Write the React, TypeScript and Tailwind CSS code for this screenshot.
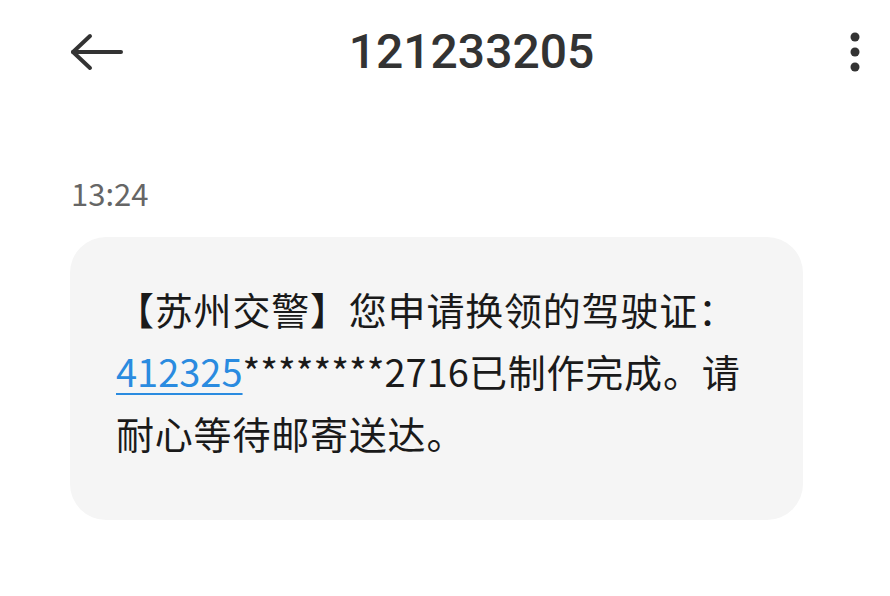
import React from 'react';

const BackArrow = () => (
  <svg width="56" height="40" viewBox="0 0 56 40" fill="none" stroke="#333" strokeWidth="4" strokeLinecap="round" strokeLinejoin="round">
    <path d="M4 20 H52" />
    <path d="M21 4 L4 20 L21 36" />
  </svg>
);

const MoreDots = () => (
  <svg width="20" height="44" viewBox="0 0 20 44" fill="#333">
    <circle cx="10" cy="7" r="4.5" />
    <circle cx="10" cy="22" r="4.5" />
    <circle cx="10" cy="37" r="4.5" />
  </svg>
);

export default function App() {
  return (
    <div
      className="w-[890px] h-[596px] bg-white overflow-hidden"
      style={{ fontFamily: '"Noto Sans CJK SC", "Noto Sans", sans-serif' }}
    >
      {/* Top bar */}
      <div className="flex items-center h-[102px] pt-[2px]">
        <div className="ml-[69px]">
          <BackArrow />
        </div>
        <div
          className="flex-1 pr-[27px] text-center text-[48px] font-medium text-[#333] leading-none"
          style={{ fontFamily: 'Roboto, "Noto Sans", sans-serif' }}
        >
          121233205
        </div>
        <div className="mr-[25px]">
          <MoreDots />
        </div>
      </div>

      {/* Timestamp */}
      <div className="mt-[72px] ml-[71px] text-[31px] leading-[38px] text-[#666]">13:24</div>

      {/* Message bubble */}
      <div className="mt-[25px] ml-[70px] w-[733px] h-[283px] rounded-[36px] bg-[#f5f5f5] pl-[46px] pt-[41px]">
        <p className="w-[650px] text-[38px] leading-[62px] tracking-[0.8px] text-[#1a1a1a]">
          【苏州交警】您申请换领的驾驶证：<span className="tracking-normal"><span className="text-[#2a8be0] underline decoration-2 underline-offset-[6px]">412325</span>********2716</span>已制作完成。请耐心等待邮寄送达。
        </p>
      </div>
    </div>
  );
}
